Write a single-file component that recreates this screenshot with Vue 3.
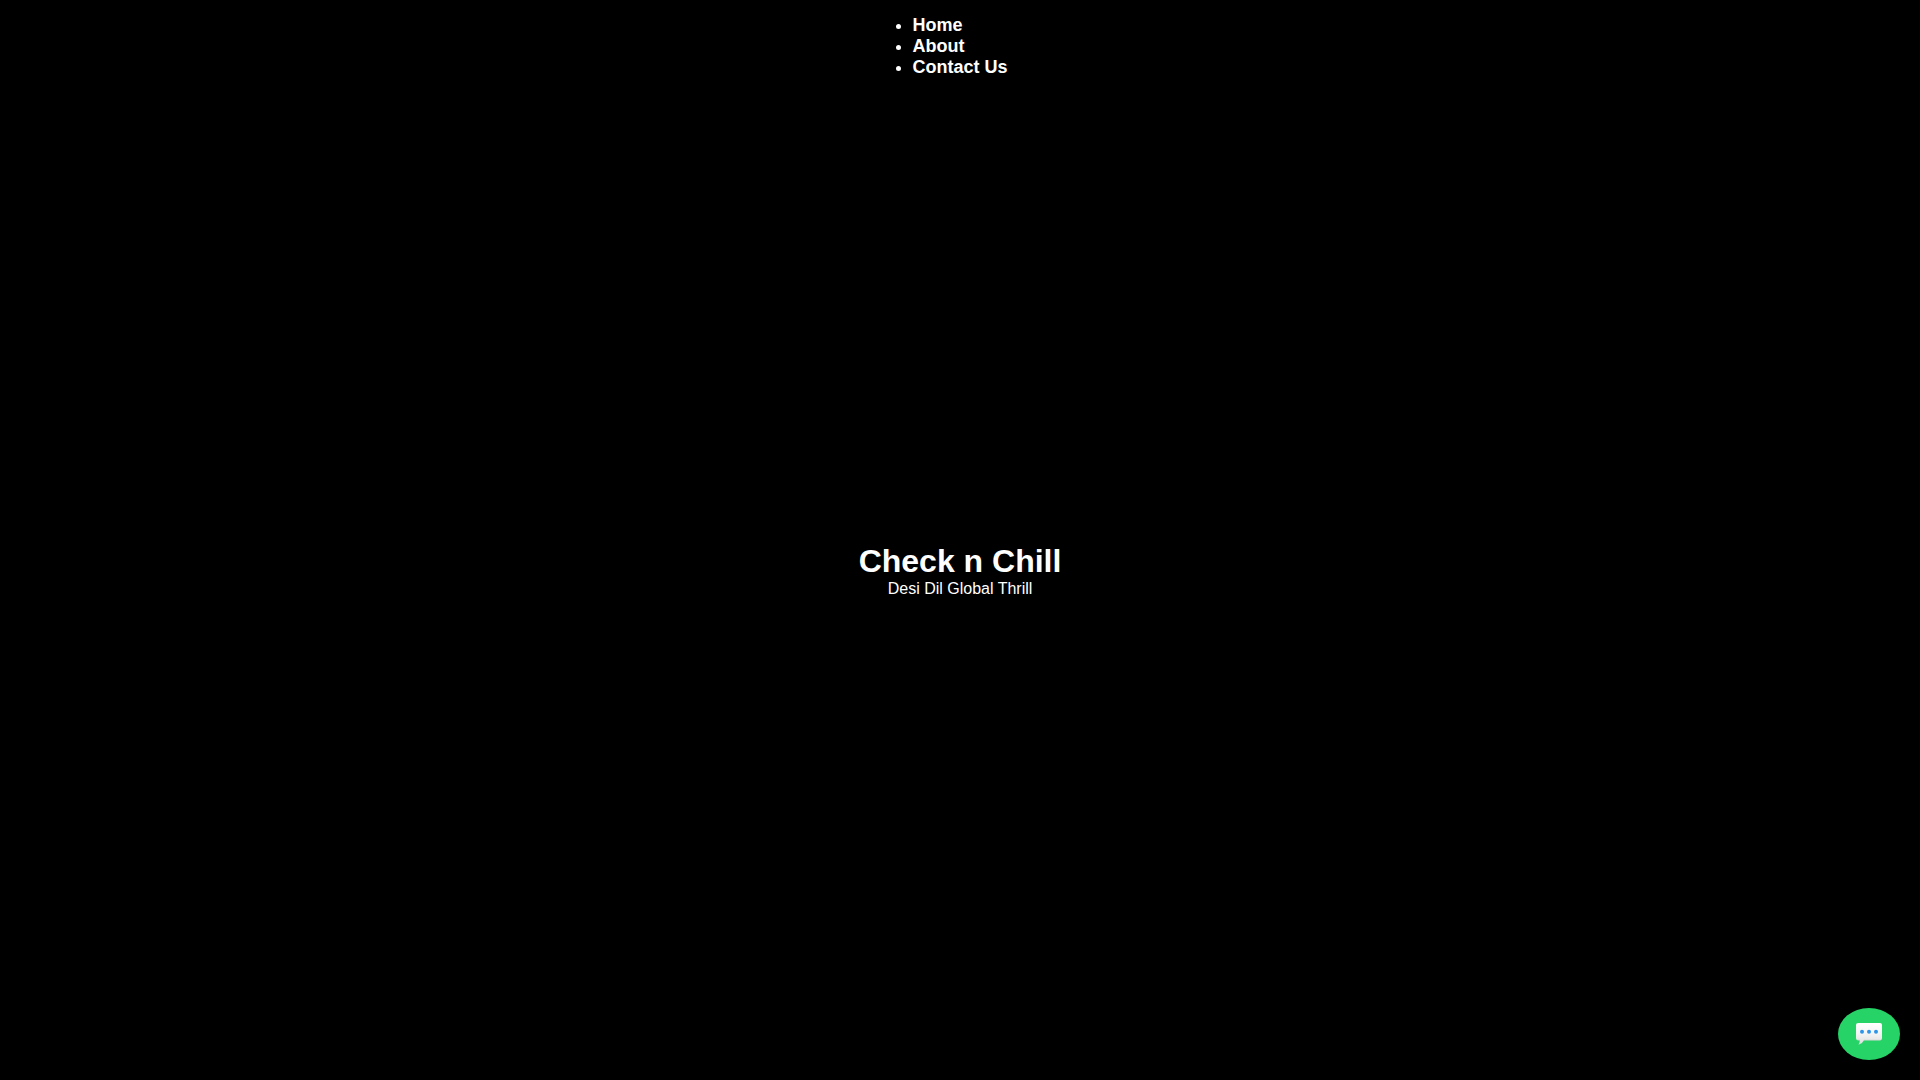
<script setup>
const links = [
  { label: 'Home', href: '#home' },
  { label: 'About', href: '#about' },
  { label: 'Contact Us', href: '#contact' },
]
</script>

<template>
  <div class="page">
    <nav class="nav">
      <ul class="nav-list">
        <li v-for="link in links" :key="link.label">
          <a :href="link.href">{{ link.label }}</a>
        </li>
      </ul>
    </nav>
    <main class="hero">
      <h1>Check n Chill</h1>
      <p>Desi Dil Global Thrill</p>
    </main>
    <a class="chat" href="#chat" aria-label="Chat">
      <svg width="30" height="28" viewBox="0 0 30 28" aria-hidden="true">
        <defs>
          <linearGradient id="bubble" x1="0" y1="0" x2="0" y2="1">
            <stop offset="0" stop-color="#ffffff" />
            <stop offset="0.45" stop-color="#f6f6f6" />
            <stop offset="1" stop-color="#dedede" />
          </linearGradient>
        </defs>
        <path
          d="M4 3H26Q28 3 28 5V18.3Q28 20.3 26 20.3H10Q8.6 23.4 5 24.5Q4.3 24.6 4.7 24Q6 22.3 5.7 20.3H4Q2 20.3 2 18.3V5Q2 3 4 3Z"
          fill="url(#bubble)"
        />
        <path d="M3.2 20H5.7M10 20.1H26.8" stroke="#c8cfca" stroke-width="0.6" />
        <g fill="#2f95e8">
          <circle cx="8" cy="11.7" r="2" />
          <circle cx="15" cy="11.7" r="2" />
          <circle cx="22" cy="11.7" r="2" />
        </g>
      </svg>
    </a>
  </div>
</template>

<style>
body {
  margin: 0;
  background: #000;
}
</style>

<style scoped>
.page {
  display: flex;
  flex-direction: column;
  min-height: 100vh;
  background: #000;
  color: #fff;
  font-family: "Liberation Sans", Arial, sans-serif;
}
.nav {
  display: flex;
  justify-content: center;
  padding: 15px;
}
.nav-list {
  margin: 0;
  padding: 0;
  font-size: 16px;
}
.nav-list a {
  color: #fff;
  font-size: 18px;
  font-weight: bold;
  text-decoration: none;
}
.hero {
  flex: 1;
  display: flex;
  flex-direction: column;
  align-items: center;
  justify-content: center;
  padding-bottom: 32px;
  text-align: center;
}
.hero h1,
.hero p {
  margin: 0;
}
.hero h1 {
  font-size: 32px;
}
.hero p {
  font-size: 16px;
}
.chat {
  position: fixed;
  right: 20px;
  bottom: 20px;
  display: flex;
  padding: 12px 16px;
  border-radius: 50%;
  background: #25d366;
}
</style>
